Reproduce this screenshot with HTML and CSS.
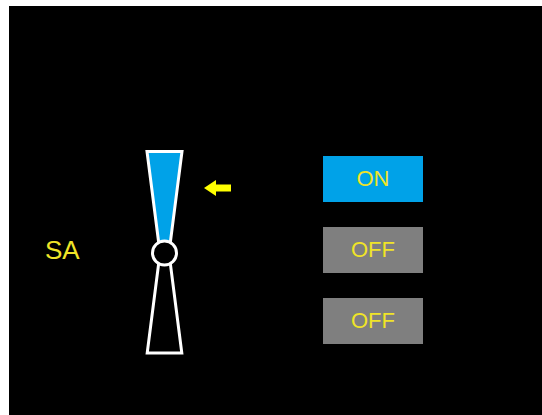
FILE: index.html
```html
<!DOCTYPE html>
<html>
<head>
<meta charset="utf-8">
<link rel="stylesheet" href="styles.css">
</head>
<body>
<div class="frame">
  <div class="stage">
    <div class="label">SA</div>
    <svg class="gauge" width="95" height="215" viewBox="0 0 95 215">
      <polygon points="7,6.5 42,6.5 30,100 19,100" fill="#00a2e8" stroke="#fff" stroke-width="3" stroke-linejoin="miter"/>
      <polygon points="19.5,112 29.5,112 41.8,208 7.2,208" fill="#000" stroke="#fff" stroke-width="3"/>
      <circle cx="24.5" cy="108" r="12" fill="#000" stroke="#fff" stroke-width="3"/>
      <polygon points="64,43 76,35 76,39.5 91,39.5 91,46.5 76,46.5 76,51" fill="#ffff00"/>
    </svg>
    <div class="buttons">
      <div class="btn on">ON</div>
      <div class="btn off">OFF</div>
      <div class="btn off">OFF</div>
    </div>
  </div>
</div>
</body>
</html>
```
FILE: styles.css
```css
html, body {
  margin: 0;
  padding: 0;
  background: #fff;
  overflow: hidden;
}
.frame {
  padding: 6px 0 0 9px;
  width: 533px;
  height: 409px;
}
.stage {
  background: #000;
  width: 533px;
  height: 409px;
  display: flex;
  align-items: flex-start;
  font-family: "Liberation Sans", Arial, sans-serif;
  color: #f0e428;
}
.label {
  width: 95px;
  margin-left: 36px;
  margin-top: 229px;
  font-size: 26px;
  line-height: 30px;
}
.gauge {
  display: block;
  margin-top: 139px;
  flex: none;
}
.buttons {
  margin-left: 88px;
  margin-top: 150px;
  display: flex;
  flex-direction: column;
  gap: 25px;
}
.btn {
  width: 100px;
  height: 46px;
  display: flex;
  align-items: center;
  justify-content: center;
  font-size: 22px;
}
.on {
  background: #00a2e8;
}
.off {
  background: #7f7f7f;
}
```
